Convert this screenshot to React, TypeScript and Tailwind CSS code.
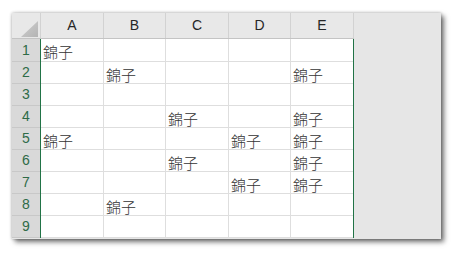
import React from "react";

const cols = ["A", "B", "C", "D", "E"];
const widths = ["w-[63px]", "w-[62px]", "w-[63px]", "w-[62px]", "w-[62px]"];
const data: string[][] = [
  ["A"],
  ["B", "E"],
  [],
  ["C", "E"],
  ["A", "D", "E"],
  ["C", "E"],
  ["D", "E"],
  ["B"],
  [],
];

export default function App() {
  return (
    <div className="w-[454px] h-[253px] bg-white pt-[13px] pl-[12px]" style={{ fontFamily: '"Liberation Sans", Arial, sans-serif' }}>
      <div className="w-[429px] h-[226px] bg-[#e6e6e6] flex shadow-[3px_3px_5px_rgba(0,0,0,0.55),0_0_3px_rgba(0,0,0,0.3)]">
        <div className="w-[342px] flex flex-col">
          {/* header row */}
          <div className="h-[26px] flex border-b border-[#c4c4c4] bg-[#e8e8e8]">
            <div className="w-[29px] h-full border-r border-[#d2d2d2] relative">
              <svg className="absolute left-[9px] top-[8px]" width="17" height="16" viewBox="0 0 17 16">
                <defs>
                  <linearGradient id="tri" x1="0" y1="0" x2="1" y2="1">
                    <stop offset="0" stopColor="#d0d0d0" />
                    <stop offset="1" stopColor="#b4b4b4" />
                  </linearGradient>
                </defs>
                <polygon points="17,0 17,16 0,16" fill="url(#tri)" />
              </svg>
            </div>
            {cols.map((c, i) => (
              <div
                key={c}
                className={`${i === 4 ? "w-[63px]" : widths[i]} h-full border-r border-[#d2d2d2] flex items-center justify-center text-[14px] text-[#262626]`}
              >
                {c}
              </div>
            ))}
          </div>
          {/* body */}
          <div className="flex">
            <div className="w-[28px] flex flex-col bg-[#d9d9d9]">
              {data.map((_, r) => (
                <div
                  key={r}
                  className={`${r === 0 ? "h-[23px]" : "h-[22px]"} border-b border-[#c8c8c8] flex items-center justify-center text-[14px] text-[#2e6b47]`}
                >
                  {r + 1}
                </div>
              ))}
            </div>
            <div className="flex flex-col bg-white border-l border-r border-[#217346]">
              {data.map((row, r) => (
                <div key={r} className={`${r === 0 ? "h-[23px]" : "h-[22px]"} flex border-b border-[#dedede]`}>
                  {cols.map((c, i) => (
                    <div
                      key={c}
                      className={`${widths[i]} h-full ${i < 4 ? "border-r border-[#dedede]" : ""} flex items-center pl-[2px] pt-[3px] text-[15px] leading-none font-light text-[#333333]`}
                      style={{ fontFamily: '"Noto Sans CJK TC", sans-serif' }}
                    >
                      {row.includes(c) ? "錦子" : ""}
                    </div>
                  ))}
                </div>
              ))}
            </div>
          </div>
        </div>
      </div>
    </div>
  );
}
